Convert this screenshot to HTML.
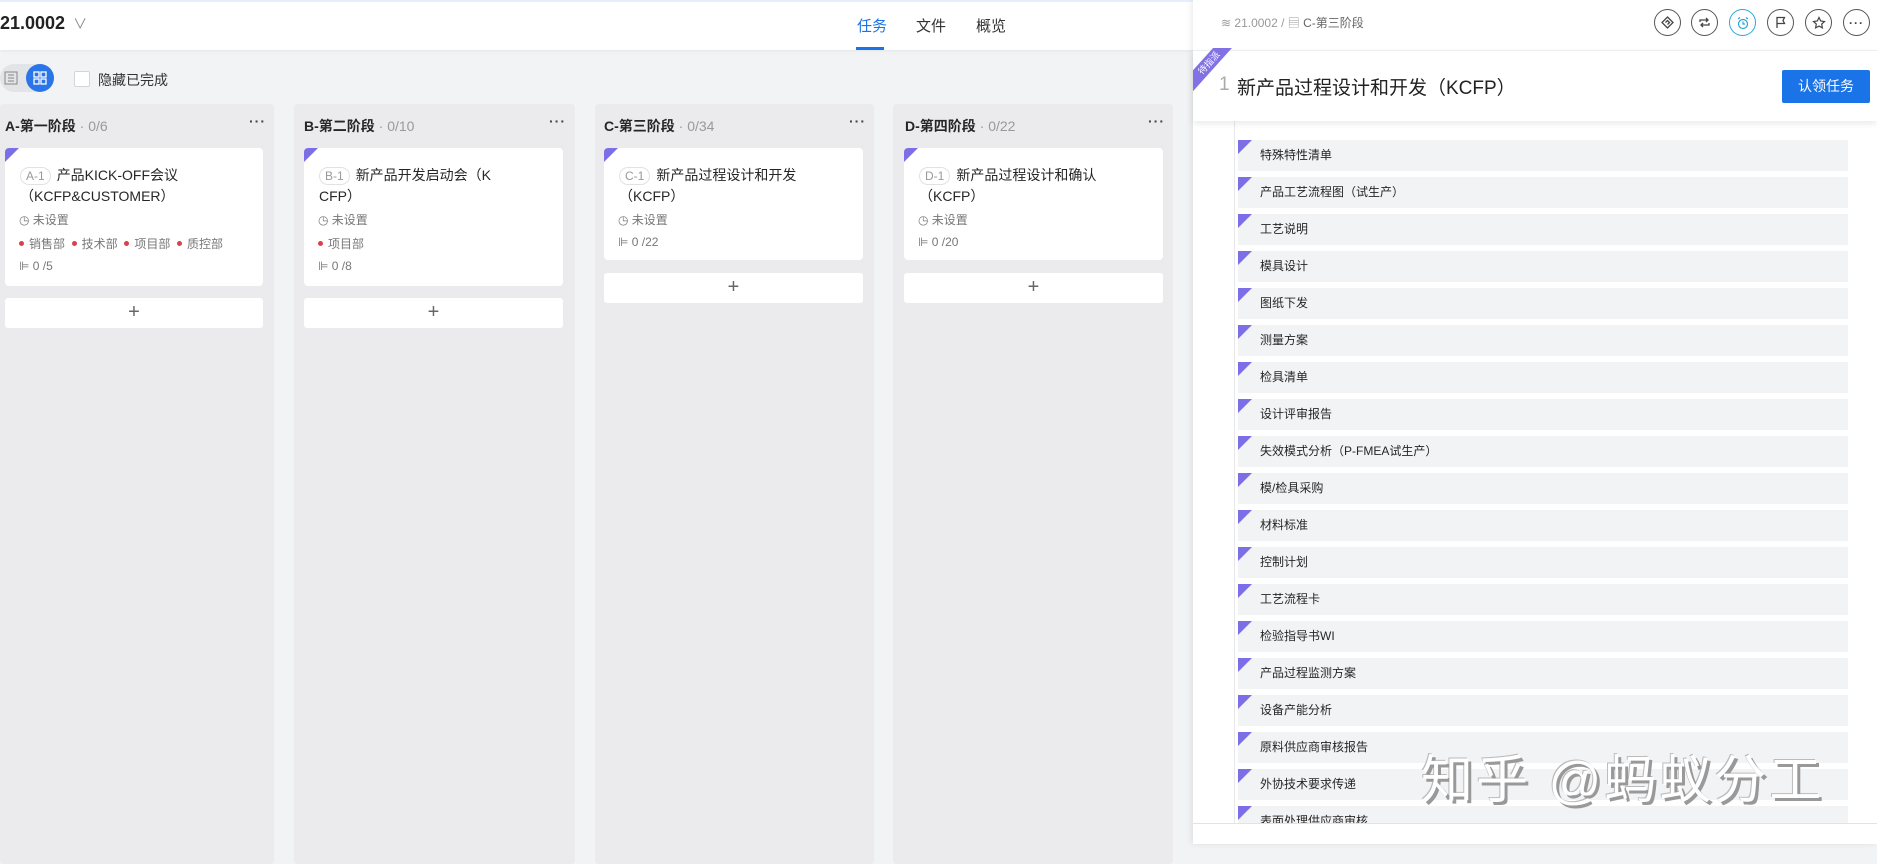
<!DOCTYPE html>
<html><head><meta charset="utf-8">
<style>
*{box-sizing:border-box;margin:0;padding:0}
body{width:1877px;height:844px;overflow:hidden;background:#f2f3f5;font-family:"Liberation Sans","Noto Sans CJK SC",sans-serif;color:#262626;position:relative}
.hdr{position:absolute;left:0;top:0;width:1193px;height:50px;background:#fff;border-top:2px solid #e6eefc;box-shadow:0 1px 3px rgba(0,0,0,.06)}
.ttl{position:absolute;left:0;top:11px;font-size:18px;font-weight:bold;color:#222}
.ttl span{font-weight:normal;color:#888;font-size:14px;margin-left:8px}
.tab{position:absolute;top:13px;font-size:15px;color:#333}
.tab.on{color:#1b73e8}
.uline{position:absolute;left:856px;top:45px;width:28px;height:3px;background:#1b73e8}
.tgl{position:absolute;left:0;top:64px;width:54px;height:28px;border-radius:14px;background:#e3e4e7}
.tgl .b{position:absolute;left:26px;top:0;width:28px;height:28px;border-radius:14px;background:#2a75e8}
.cb{position:absolute;left:74px;top:71px;width:16px;height:16px;background:#fff;border:1px solid #d5d5d5;border-radius:2px}
.cbt{position:absolute;left:98px;top:70px;font-size:14px;color:#333}
.col{position:absolute;top:104px;height:760px;background:#ebebed;border-radius:4px}
.ch{position:absolute;left:5px;top:116px;font-size:14px;font-weight:bold;color:#262626}
.ch span{font-weight:normal;color:#999}
.dots{position:absolute;top:113px;font-size:14px;color:#444;letter-spacing:1px;font-weight:bold}
.card{position:absolute;top:148px;background:#fff;border-radius:4px;overflow:hidden}
.card:before,.item:before{content:"";position:absolute;left:0;top:0;border-style:solid;border-width:14px 14px 0 0;border-color:#7b6ee6 transparent transparent transparent}
.ct{position:absolute;left:15px;top:17px;font-size:14px;line-height:21px;color:#262626;width:220px}
.tag{display:inline-block;border:1px solid #e2e2e2;border-radius:9px;padding:0 5px;font-size:12px;color:#999;line-height:16px;margin-right:6px}
.meta{position:absolute;left:14px;font-size:12px;color:#777}
.dot{display:inline-block;width:5px;height:5px;border-radius:50%;background:#d9414f;margin:0 5px 2px 0;vertical-align:middle}
.add{position:absolute;height:30px;background:#fff;border-radius:3px;text-align:center;font-size:20px;line-height:28px;color:#666;font-weight:300}
.panel{position:absolute;left:1193px;top:0;width:684px;height:844px;background:#fff;box-shadow:-2px 0 6px rgba(0,0,0,.08)}
.bc{position:absolute;left:28px;top:14px;font-size:12px;color:#999}
.bc b{font-weight:normal;color:#666}
.ic{position:absolute;top:9px;width:27px;height:27px;border:1px solid #555;border-radius:50%;display:flex;align-items:center;justify-content:center}
.thd{position:absolute;left:0;top:50px;width:684px;height:71px;background:#fff;box-shadow:0 3px 6px rgba(0,0,0,.08);z-index:2;border-top:1px solid #eee}
.tnum{position:absolute;left:26px;top:23px;font-size:19px;color:#aaa}
.tt{position:absolute;left:44px;top:22px;font-size:19px;color:#222}
.btn{position:absolute;left:589px;top:19px;width:88px;height:33px;background:#1b73e8;color:#fff;font-size:14px;line-height:33px;text-align:center;border-radius:2px}
.rib{position:absolute;left:-17px;top:8px;width:66px;height:14px;background:#8271e4;color:#fff;font-size:9px;line-height:14px;text-align:center;transform:rotate(-48deg);z-index:3}
.lst{position:absolute;left:41px;top:118px;width:650px;height:710px;border-left:1px solid #e8e8e8}
.item{position:absolute;left:3px;width:610px;height:31px;background:#f2f3f5;font-size:12px;line-height:31px;padding-left:22px;color:#262626}
.foot{position:absolute;left:0;top:823px;width:684px;height:21px;background:#fff;border-top:1px solid #e3e3e3;z-index:2}
.wm{position:absolute;left:1421px;top:738px;font-size:52px;color:#fff;text-shadow:3px 3px 0 #999,-1px -1px 0 #bbb;z-index:5;letter-spacing:3px;white-space:nowrap}
</style></head><body>
<div class="hdr">
<div class="ttl">21.0002<span>∨</span></div>
<div class="tab on" style="left:857px">任务</div>
<div class="tab" style="left:916px">文件</div>
<div class="tab" style="left:976px">概览</div>
<div class="uline"></div>
</div>
<div class="tgl"><svg style="position:absolute;left:4px;top:7px" width="14" height="14" viewBox="0 0 14 14" fill="none" stroke="#888"><rect x="1" y="1" width="12" height="12"/><path d="M4 4h6M4 7h6M4 10h6"/></svg><div class="b"><svg style="position:absolute;left:7px;top:7px" width="14" height="14" viewBox="0 0 14 14" fill="none" stroke="#fff" stroke-width="1.3"><rect x="1" y="1" width="5" height="5"/><rect x="8" y="1" width="5" height="5"/><rect x="1" y="8" width="5" height="5"/><rect x="8" y="8" width="5" height="5"/></svg></div></div>
<div class="cb"></div><div class="cbt">隐藏已完成</div>

<div class="col" style="left:0;width:274px"></div>
<div class="col" style="left:294px;width:281px"></div>
<div class="col" style="left:595px;width:279px"></div>
<div class="col" style="left:893px;width:280px"></div>

<div class="ch" style="left:5px">A-第一阶段 <span>· 0/6</span></div><div class="dots" style="left:249px">···</div>
<div class="ch" style="left:304px">B-第二阶段 <span>· 0/10</span></div><div class="dots" style="left:549px">···</div>
<div class="ch" style="left:604px">C-第三阶段 <span>· 0/34</span></div><div class="dots" style="left:849px">···</div>
<div class="ch" style="left:905px">D-第四阶段 <span>· 0/22</span></div><div class="dots" style="left:1148px">···</div>

<div class="card" style="left:5px;width:258px;height:138px">
<div class="ct"><span class="tag">A-1</span>产品KICK-OFF会议<br>（KCFP&amp;CUSTOMER）</div>
<div class="meta" style="top:63px">◷ 未设置</div>
<div class="meta" style="top:87px"><span class="dot"></span>销售部 &nbsp;<span class="dot"></span>技术部 &nbsp;<span class="dot"></span>项目部 &nbsp;<span class="dot"></span>质控部</div>
<div class="meta" style="top:111px">⊫ 0 /5</div>
</div>
<div class="add" style="left:5px;top:298px;width:258px">+</div>

<div class="card" style="left:304px;width:259px;height:138px">
<div class="ct"><span class="tag">B-1</span>新产品开发启动会（K<br>CFP）</div>
<div class="meta" style="top:63px">◷ 未设置</div>
<div class="meta" style="top:87px"><span class="dot"></span>项目部</div>
<div class="meta" style="top:111px">⊫ 0 /8</div>
</div>
<div class="add" style="left:304px;top:298px;width:259px">+</div>

<div class="card" style="left:604px;width:259px;height:112px">
<div class="ct"><span class="tag">C-1</span>新产品过程设计和开发<br>（KCFP）</div>
<div class="meta" style="top:63px">◷ 未设置</div>
<div class="meta" style="top:87px">⊫ 0 /22</div>
</div>
<div class="add" style="left:604px;top:273px;width:259px">+</div>

<div class="card" style="left:904px;width:259px;height:112px">
<div class="ct"><span class="tag">D-1</span>新产品过程设计和确认<br>（KCFP）</div>
<div class="meta" style="top:63px">◷ 未设置</div>
<div class="meta" style="top:87px">⊫ 0 /20</div>
</div>
<div class="add" style="left:904px;top:273px;width:259px">+</div>

<div class="panel">
<div class="bc">≋ 21.0002 / ▤ <b>C-第三阶段</b></div>
<div class="ic" style="left:461px"><svg width="13" height="13" viewBox="0 0 13 13" fill="none" stroke="#444" stroke-width="1.3"><path d="M6.5 1l5.5 5.5-5.5 5.5L1 6.5z"/><path d="M4.5 6.5l2-2 2 2-2 2"/></svg></div>
<div class="ic" style="left:498px"><svg width="13" height="13" viewBox="0 0 13 13" fill="none" stroke="#444" stroke-width="1.3"><path d="M2 6V4h8M8 2l2 2-2 2M11 7v2H3M5 11L3 9l2-2"/></svg></div>
<div class="ic" style="left:536px;border-color:#2aa7d8"><svg width="14" height="14" viewBox="0 0 14 14" fill="none" stroke="#2aa7d8" stroke-width="1.2"><circle cx="7" cy="8" r="4.5"/><path d="M7 5.5V8h2M2 3l2-1.5M12 3l-2-1.5"/></svg></div>
<div class="ic" style="left:574px"><svg width="13" height="13" viewBox="0 0 13 13" fill="none" stroke="#444" stroke-width="1.3"><path d="M3 12V1.5h7.5L9 4.5l1.5 3H3"/></svg></div>
<div class="ic" style="left:612px"><svg width="14" height="14" viewBox="0 0 14 14" fill="none" stroke="#444" stroke-width="1.2"><path d="M7 1.5l1.7 3.5 3.8.5-2.8 2.6.7 3.8L7 10.1l-3.4 1.8.7-3.8L1.5 5.5l3.8-.5z"/></svg></div>
<div class="ic" style="left:650px;font-size:12px;font-weight:bold;color:#444;letter-spacing:1px">···</div>
<div class="thd">
<div class="tnum">1</div>
<div class="tt">新产品过程设计和开发（KCFP）</div>
<div class="btn">认领任务</div>
</div>
<div style="position:absolute;left:0;top:48px;width:50px;height:50px;overflow:hidden;z-index:3"><div class="rib">待指派</div></div>
<div class="lst">
<div class="item" style="top:22px">特殊特性清单</div>
<div class="item" style="top:59px">产品工艺流程图（试生产）</div>
<div class="item" style="top:96px">工艺说明</div>
<div class="item" style="top:133px">模具设计</div>
<div class="item" style="top:170px">图纸下发</div>
<div class="item" style="top:207px">测量方案</div>
<div class="item" style="top:244px">检具清单</div>
<div class="item" style="top:281px">设计评审报告</div>
<div class="item" style="top:318px">失效模式分析（P-FMEA试生产）</div>
<div class="item" style="top:355px">模/检具采购</div>
<div class="item" style="top:392px">材料标准</div>
<div class="item" style="top:429px">控制计划</div>
<div class="item" style="top:466px">工艺流程卡</div>
<div class="item" style="top:503px">检验指导书WI</div>
<div class="item" style="top:540px">产品过程监测方案</div>
<div class="item" style="top:577px">设备产能分析</div>
<div class="item" style="top:614px">原料供应商审核报告</div>
<div class="item" style="top:651px">外协技术要求传递</div>
<div class="item" style="top:688px">表面处理供应商审核</div>
</div>
<div class="foot"></div>
</div>
<div class="wm">知乎 @蚂蚁分工</div>
</body></html>
